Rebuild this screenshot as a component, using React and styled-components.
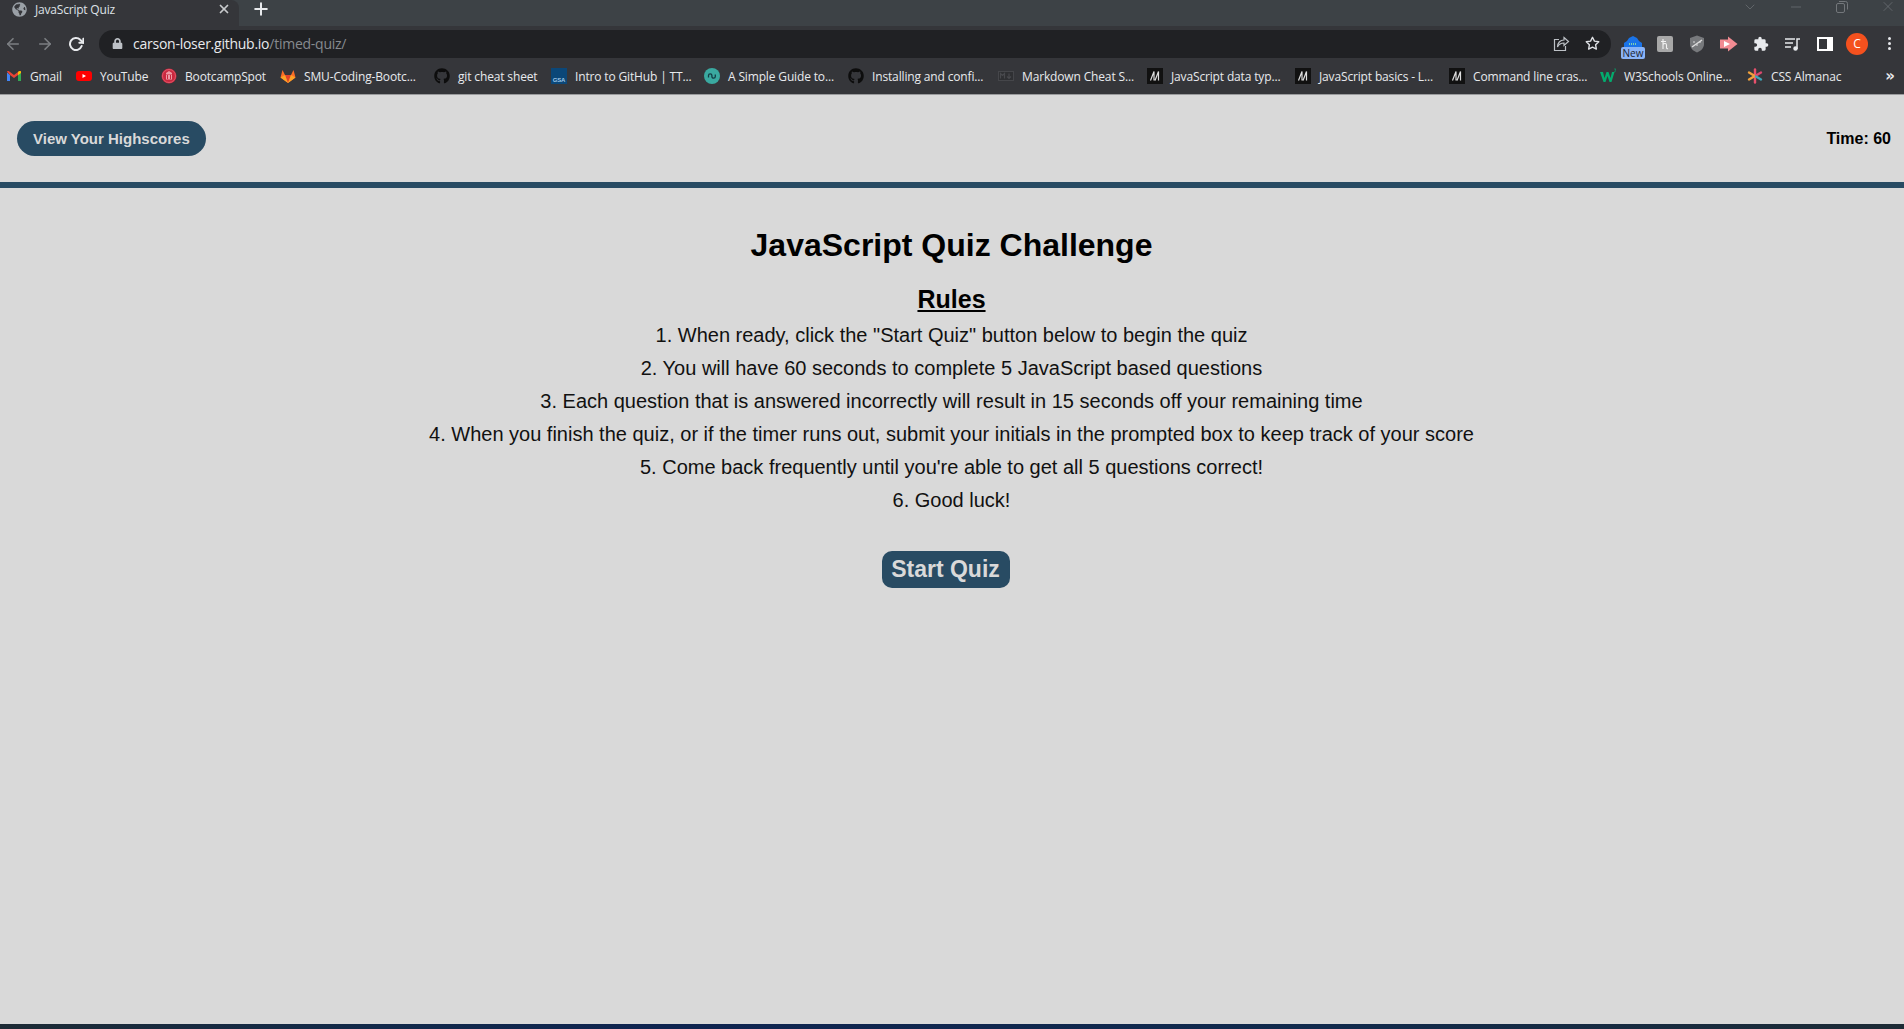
import React from 'react'
import styled, { createGlobalStyle } from 'styled-components'
import { FaGithub, FaGlobeAmericas, FaLock } from 'react-icons/fa'
import { FiStar, FiX, FiPlus, FiArrowLeft, FiArrowRight, FiRotateCw, FiChevronDown, FiMinus } from 'react-icons/fi'

const GlobalStyle = createGlobalStyle`
    html, body {
        margin: 0;
        padding: 0;
        background: #d9d9d9;
        font-family: "Liberation Sans", Arial, sans-serif;
    }
`;

const BLUE = '#284b63'

const bookmarks = [
    { label: 'Gmail', icon: 'gmail', width: 70 },
    { label: 'YouTube', icon: 'youtube', width: 85 },
    { label: 'BootcampSpot', icon: 'bootcamp', width: 119 },
    { label: 'SMU-Coding-Bootc...', icon: 'gitlab', width: 154 },
    { label: 'git cheat sheet', icon: 'github', width: 117 },
    { label: 'Intro to GitHub | TT...', icon: 'gsa', width: 153 },
    { label: 'A Simple Guide to...', icon: 'guide', width: 144 },
    { label: 'Installing and confi...', icon: 'github', width: 150 },
    { label: 'Markdown Cheat S...', icon: 'md', width: 149 },
    { label: 'JavaScript data typ...', icon: 'mdn', width: 148 },
    { label: 'JavaScript basics - L...', icon: 'mdn', width: 154 },
    { label: 'Command line cras...', icon: 'mdn', width: 151 },
    { label: 'W3Schools Online...', icon: 'w3', width: 147 },
    { label: 'CSS Almanac', icon: 'css', width: 100 },
]

const rules = [
    '1. When ready, click the "Start Quiz" button below to begin the quiz',
    '2. You will have 60 seconds to complete 5 JavaScript based questions',
    '3. Each question that is answered incorrectly will result in 15 seconds off your remaining time',
    '4. When you finish the quiz, or if the timer runs out, submit your initials in the prompted box to keep track of your score',
    "5. Come back frequently until you're able to get all 5 questions correct!",
    '6. Good luck!',
]

function BookmarkIcon({ type }) {
    switch (type) {
        case 'gmail':
            return (
                <svg width="16" height="16" viewBox="0 0 16 16">
                    <path d="M1 4.500V13h3V7z" fill="#4285f4" />
                    <path d="M15 4.500V13h-3V7z" fill="#34a853" />
                    <path d="M1 3.800C1 3 2.200 2.600 3 3.200L8 7l5-3.800c.8-.6 2-.2 2 .6L12 7 8 10 4 7z" fill="#ea4335" />
                    <path d="M12 4l1-.8c.8-.6 2-.2 2 .6V5l-3 2.200z" fill="#fbbc04" />
                </svg>
            )
        case 'youtube':
            return (
                <svg width="16" height="16" viewBox="0 0 16 16">
                    <rect x="0" y="3" width="16" height="10" rx="3" fill="#f00" />
                    <path d="M6.500 6v4L10 8z" fill="#fff" />
                </svg>
            )
        case 'bootcamp':
            return (
                <svg width="16" height="16" viewBox="0 0 16 16">
                    <circle cx="8" cy="8" r="7.500" fill="#c9283e" />
                    <circle cx="8" cy="8" r="6.500" fill="none" stroke="#e8697a" strokeWidth=".7" />
                    <path d="M8 3l3 2v1H5V5z" fill="#ee9aa5" />
                    <rect x="5" y="6.500" width="6" height="5" fill="#ee9aa5" />
                    <rect x="6" y="7" width="1" height="4" fill="#c9283e" />
                    <rect x="9" y="7" width="1" height="4" fill="#c9283e" />
                </svg>
            )
        case 'gitlab':
            return (
                <svg width="16" height="16" viewBox="0 0 16 16">
                    <path d="M8 15 .5 9.500 2.500 2 5 7h6l2.500-5 2 7.500z" fill="#fc6d26" />
                    <path d="M8 15 5 7h6z" fill="#e24329" />
                    <path d="M8 15 .5 9.500 5 7zM8 15l7.500-5.500L11 7z" fill="#fca326" />
                </svg>
            )
        case 'github':
            return <FaGithub size={16} color="#0d0d0d" />
        case 'gsa':
            return <GsaIcon>GSA</GsaIcon>
        case 'guide':
            return (
                <svg width="16" height="16" viewBox="0 0 16 16">
                    <circle cx="8" cy="8" r="8" fill="#3aa9a0" />
                    <path d="M4.500 9.500V7.500a1.700 1.700 0 0 1 3.400 0v1a1.700 1.700 0 0 0 3.400 0V6.500" fill="none" stroke="#143c44" strokeWidth="1.300" />
                </svg>
            )
        case 'md':
            return (
                <svg width="16" height="16" viewBox="0 0 16 16">
                    <rect x=".5" y="3.500" width="15" height="9" fill="#2f3033" stroke="#45464a" />
                    <path d="M2.500 10.500v-5l2 2 2-2v5M11 5.500v5M9 8.500l2 2 2-2" fill="none" stroke="#48494d" strokeWidth="1.200" />
                </svg>
            )
        case 'mdn':
            return (
                <svg width="16" height="16" viewBox="0 0 16 16">
                    <rect width="16" height="16" fill="#111" />
                    <path d="M3.500 12.500 7 3.500v9M8 12.500l3.500-9v9" fill="none" stroke="#ddd" strokeWidth="1.200" />
                </svg>
            )
        case 'w3':
            return (
                <svg width="16" height="16" viewBox="0 0 16 16">
                    <path d="M0 4h3l1.500 6 2-6h2l2 6L12 4h2.500l-3 10h-2l-2-6-2 6h-2z" fill="#04aa6d" />
                    <path d="M14 1h2l-1 1.200c1 0 1 1.800-1 1.500" fill="none" stroke="#04aa6d" strokeWidth=".6" />
                </svg>
            )
        case 'css':
            return (
                <svg width="16" height="16" viewBox="0 0 16 16" strokeWidth="2.400" strokeLinecap="round">
                    <path d="M8 1.500v5" stroke="#e8506c" />
                    <path d="M8 9.500v5" stroke="#e8506c" />
                    <path d="M2 4.500 7 7.500" stroke="#f0a03c" />
                    <path d="M14 4.500 9 7.500" stroke="#d9486e" />
                    <path d="M2 11.500 7 8.500" stroke="#f0a03c" />
                    <path d="M14 11.500 9 8.500" stroke="#3fa5b8" />
                </svg>
            )
        default:
            return null
    }
}

function App() {
    return (
        <>
            <GlobalStyle />
            <Page>
                <Browser>
                    <TabStrip>
                        <Tab>
                            <FaGlobeAmericas size={15} color="#9aa0a6" />
                            <TabTitle>JavaScript Quiz</TabTitle>
                            <FiX size={14} color="#c8cacc" strokeWidth={3} />
                        </Tab>
                        <NewTab>
                            <FiPlus size={20} color="#e8eaed" strokeWidth={2.400} />
                        </NewTab>
                        <WindowControls>
                            <WindowSlot><FiChevronDown size={16} strokeWidth={1} /></WindowSlot>
                            <WindowSlot><FiMinus size={16} strokeWidth={1} /></WindowSlot>
                            <WindowSlot>
                                <svg width="12" height="12" viewBox="0 0 12 12" fill="none" stroke="currentColor">
                                    <rect x=".5" y="2.500" width="8" height="9" rx="1.500" />
                                    <path d="M3 .5h6.500a2 2 0 0 1 2 2v6" />
                                </svg>
                            </WindowSlot>
                            <WindowSlot><FiX size={17} strokeWidth={1} /></WindowSlot>
                        </WindowControls>
                    </TabStrip>
                    <Toolbar>
                        <NavIcons>
                            <FiArrowLeft size={18} color="#7c7f83" strokeWidth={2.200} />
                            <FiArrowRight size={18} color="#7c7f83" strokeWidth={2.200} />
                            <FiRotateCw size={16} color="#e8eaed" strokeWidth={3} />
                        </NavIcons>
                        <Omnibox>
                            <FaLock size={11} color="#bdc1c6" />
                            <Url>carson-loser.github.io<UrlPath>/timed-quiz/</UrlPath></Url>
                            <OmniIcons>
                                <svg width="17" height="16" viewBox="0 0 17 16" fill="none" stroke="#bdc1c6" strokeWidth="1.200">
                                    <path d="M6 3.500H1.500v11h11V10" />
                                    <path d="M11 1.500 15.500 5.500 11 9.500V7C8 7 6 8 4.500 11 4.500 7 7 4 11 4z" />
                                </svg>
                                <FiStar size={15} color="#dfe1e5" strokeWidth={2.200} />
                            </OmniIcons>
                        </Omnibox>
                        <Extensions>
                            <ExtensionNew>
                                <svg width="18" height="11" viewBox="0 0 18 11">
                                    <path d="M0 11V7l3-2 2-3 4-2 4 2 2 3 3 2v4z" fill="#1a73e8" />
                                    <path d="M5 8h8" stroke="#7fd1ae" strokeWidth="2" strokeDasharray="1 1" />
                                </svg>
                                <NewBadge>New</NewBadge>
                            </ExtensionNew>
                            <ExtensionSlot>
                                <svg width="16" height="16" viewBox="0 0 16 16">
                                    <rect width="16" height="16" rx="2" fill="#a8a8a8" />
                                    <path d="M6 3v10M6 8.500c1-1.500 3.500-1.500 3.500.5v2.500c0 1 .7 1.500 1.500 1M4 5.500h5" fill="none" stroke="#f2f2f2" strokeWidth="1.100" />
                                </svg>
                            </ExtensionSlot>
                            <ExtensionSlot>
                                <svg width="16" height="18" viewBox="0 0 16 18">
                                    <path d="M8 .5l7 2.500v6c0 4-3 7-7 8.500C4 16 1 13 1 9V3z" fill="#77797c" />
                                    <path d="M3 12 13 5" stroke="#ddd" strokeWidth="1.500" />
                                    <path d="M4 7h2M7 10h2M10 7h2" stroke="#ddd" />
                                </svg>
                            </ExtensionSlot>
                            <ExtensionSlot>
                                <svg width="18" height="16" viewBox="0 0 18 16">
                                    <rect x="0" y="3.500" width="11" height="9" fill="#f28b92" />
                                    <path d="M8 .5 17.500 8 8 15.500z" fill="#f28b92" />
                                    <path d="M4 5l6 3-6 3z" fill="#fff" />
                                </svg>
                            </ExtensionSlot>
                            <ExtensionSlot>
                                <svg width="16" height="16" viewBox="0 0 24 24" fill="#e8eaed">
                                    <path d="M20.500 11H19V7a2 2 0 0 0-2-2h-4V3.500a2.500 2.500 0 0 0-5 0V5H4a2 2 0 0 0-2 2v3.800h1.500a2.700 2.700 0 0 1 0 5.400H2V20a2 2 0 0 0 2 2h3.800v-1.500a2.700 2.700 0 0 1 5.400 0V22H17a2 2 0 0 0 2-2v-4h1.500a2.500 2.500 0 0 0 0-5z" />
                                </svg>
                            </ExtensionSlot>
                            <ExtensionSlot>
                                <svg width="16" height="14" viewBox="0 0 16 14" fill="none" stroke="#e8eaed" strokeWidth="1.500">
                                    <path d="M0 2h10M0 6h8M0 10h6" />
                                    <path d="M12 12V2h3" />
                                    <circle cx="10.500" cy="11.500" r="1.500" fill="#e8eaed" />
                                </svg>
                            </ExtensionSlot>
                            <ExtensionSlot><SidePanelIcon /></ExtensionSlot>
                            <ExtensionSlot><Avatar>C</Avatar></ExtensionSlot>
                            <ExtensionSlot><MenuDots><i /><i /><i /></MenuDots></ExtensionSlot>
                        </Extensions>
                    </Toolbar>
                    <BookmarkBar>
                        {bookmarks.map((b, i) => (
                            <Bookmark key={i} $width={b.width}>
                                <BookmarkIcon type={b.icon} />
                                <span>{b.label}</span>
                            </Bookmark>
                        ))}
                        <MoreBookmarks>»</MoreBookmarks>
                    </BookmarkBar>
                </Browser>

                <Main>
                    <Header>
                        <HighscoreButton>View Your Highscores</HighscoreButton>
                        <Timer>Time: 60</Timer>
                    </Header>
                    <Content>
                        <Title>JavaScript Quiz Challenge</Title>
                        <RulesHeading>Rules</RulesHeading>
                        {rules.map((r, i) => <RuleLine key={i}>{r}</RuleLine>)}
                        <StartButton>Start Quiz</StartButton>
                    </Content>
                </Main>
                <Taskbar />
            </Page>
        </>
    )
}

export default App

const Page = styled.div`
    display: flex;
    flex-direction: column;
    height: 1029px;
    overflow: hidden;
`;

const Browser = styled.div`
    flex: none;
    height: 95px;
    display: flex;
    flex-direction: column;
    background: #35363a;
`;

const TabStrip = styled.div`
    height: 26px;
    flex: none;
    display: flex;
    align-items: flex-start;
    background: #3d4246;
`;

const Tab = styled.div`
    width: 239px;
    height: 26px;
    box-sizing: border-box;
    padding: 0 8px 8px 12px;
    display: flex;
    align-items: center;
    gap: 8px;
    background: #35363a;
    border-radius: 0 8px 0 0;
`;

const TabTitle = styled.span`
    flex: 1;
    font-family: "Open Sans", sans-serif;
    font-size: 12px;
    letter-spacing: -.2px;
    color: #dee1e6;
`;

const NewTab = styled.div`
    width: 44px;
    height: 18px;
    display: flex;
    align-items: center;
    justify-content: center;
`;

const WindowControls = styled.div`
    margin-left: auto;
    height: 13px;
    padding-right: 8px;
    display: flex;
    gap: 30px;
    align-items: center;
    color: #73777b;
`;

const WindowSlot = styled.div`
    width: 16px;
    display: flex;
    align-items: center;
    justify-content: center;
`;

const Toolbar = styled.div`
    height: 35px;
    flex: none;
    display: flex;
    align-items: center;
    background: #35363a;
`;

const NavIcons = styled.div`
    flex: none;
    width: 99px;
    box-sizing: border-box;
    padding-left: 4px;
    display: flex;
    align-items: center;
    justify-content: flex-start;
    gap: 14px;
`;

const Omnibox = styled.div`
    flex: none;
    width: 1512px;
    height: 28px;
    box-sizing: border-box;
    padding: 0 11px 0 13px;
    display: flex;
    align-items: center;
    background: #202124;
    border-radius: 14px;
`;

const Url = styled.span`
    margin-left: 10px;
    font-family: "Open Sans", sans-serif;
    font-size: 14px;
    letter-spacing: -.25px;
    color: #e8eaed;
`;

const UrlPath = styled.span`
    color: #868a8f;
`;

const OmniIcons = styled.div`
    margin-left: auto;
    display: flex;
    align-items: center;
    gap: 15px;
`;

const Extensions = styled.div`
    flex: none;
    padding-left: 6px;
    display: grid;
    grid-template-columns: repeat(9, 32px);
    align-items: center;
`;

const ExtensionSlot = styled.div`
    display: flex;
    align-items: center;
    justify-content: center;
`;

const ExtensionNew = styled.div`
    margin-top: 7px;
    display: flex;
    flex-direction: column;
    align-items: center;
`;

const NewBadge = styled.div`
    width: 24px;
    height: 12px;
    font-family: "Open Sans", sans-serif;
    font-size: 10px;
    line-height: 12px;
    text-align: center;
    color: #1b2430;
    background: #8ab4f8;
    border-radius: 2px;
`;

const SidePanelIcon = styled.div`
    width: 8px;
    height: 10px;
    border: 2px solid #fff;
    border-right-width: 6px;
    background: #35363a;
`;

const Avatar = styled.div`
    width: 22px;
    height: 22px;
    font-family: "Open Sans", sans-serif;
    font-size: 12px;
    line-height: 22px;
    text-align: center;
    color: #fff;
    background: #f4511e;
    border-radius: 50%;
`;

const MenuDots = styled.div`
    display: flex;
    flex-direction: column;
    gap: 2px;
    i {
        display: block;
        width: 3px;
        height: 3px;
        background: #e8eaed;
        border-radius: 50%;
    }
`;

const BookmarkBar = styled.div`
    flex: 1;
    display: flex;
    align-items: center;
    padding: 0 9px 3px 6px;
    border-bottom: 1px solid #9a9b9d;
    background: #35363a;
`;

const Bookmark = styled.div`
    flex: none;
    width: ${p => p.$width}px;
    display: flex;
    align-items: center;
    gap: 8px;
    font-family: "Open Sans", sans-serif;
    font-size: 12px;
    letter-spacing: -.15px;
    color: #e8eaed;
    white-space: nowrap;
`;

const GsaIcon = styled.div`
    width: 16px;
    height: 16px;
    box-sizing: border-box;
    padding-top: 8px;
    font-family: "Liberation Sans", Arial, sans-serif;
    font-size: 6px;
    font-weight: 700;
    line-height: 8px;
    letter-spacing: -.2px;
    text-align: center;
    color: #9fc6e6;
    background: #0b4778;
`;

const MoreBookmarks = styled.div`
    margin-left: auto;
    font-family: "DejaVu Sans", sans-serif;
    font-size: 15px;
    font-weight: 700;
    color: #e8eaed;
`;

const Main = styled.div`
    flex: 1;
    background: #d9d9d9;
`;

const Header = styled.header`
    padding: 26px 13px 26px 17px;
    display: flex;
    align-items: center;
    justify-content: space-between;
    border-bottom: 6px solid ${BLUE};
`;

const HighscoreButton = styled.button`
    height: 35px;
    padding: 0 16px;
    font-family: "Liberation Sans", Arial, sans-serif;
    font-size: 15px;
    font-weight: 700;
    color: #d9d9d9;
    background: ${BLUE};
    border: 0;
    border-radius: 18px;
`;

const Timer = styled.div`
    font-size: 16px;
    font-weight: 700;
    color: #000;
`;

const Content = styled.main`
    display: flex;
    flex-direction: column;
    align-items: center;
    padding: 39px 1px 0 0;
`;

const Title = styled.h1`
    margin: 0 0 20px;
    font-size: 32px;
    line-height: 37px;
    font-weight: 700;
    color: #000;
`;

const RulesHeading = styled.h2`
    margin: 0 0 5px;
    font-size: 25px;
    line-height: 30px;
    font-weight: 700;
    text-decoration: underline;
    color: #000;
`;

const RuleLine = styled.p`
    margin: 0;
    font-size: 20px;
    line-height: 33px;
    color: #111;
`;

const StartButton = styled.button`
    margin: 34px 12px 0 0;
    width: 128px;
    height: 37px;
    padding: 0;
    font-family: "Liberation Sans", Arial, sans-serif;
    font-size: 23px;
    font-weight: 700;
    color: #d9d9d9;
    background: ${BLUE};
    border: 0;
    border-radius: 10px;
`;

const Taskbar = styled.div`
    flex: none;
    height: 5px;
    background: linear-gradient(90deg, #1d2b35 0%, #12294a 20%, #0f2450 35%, #112a4c 70%, #1d2b35 100%);
`;
